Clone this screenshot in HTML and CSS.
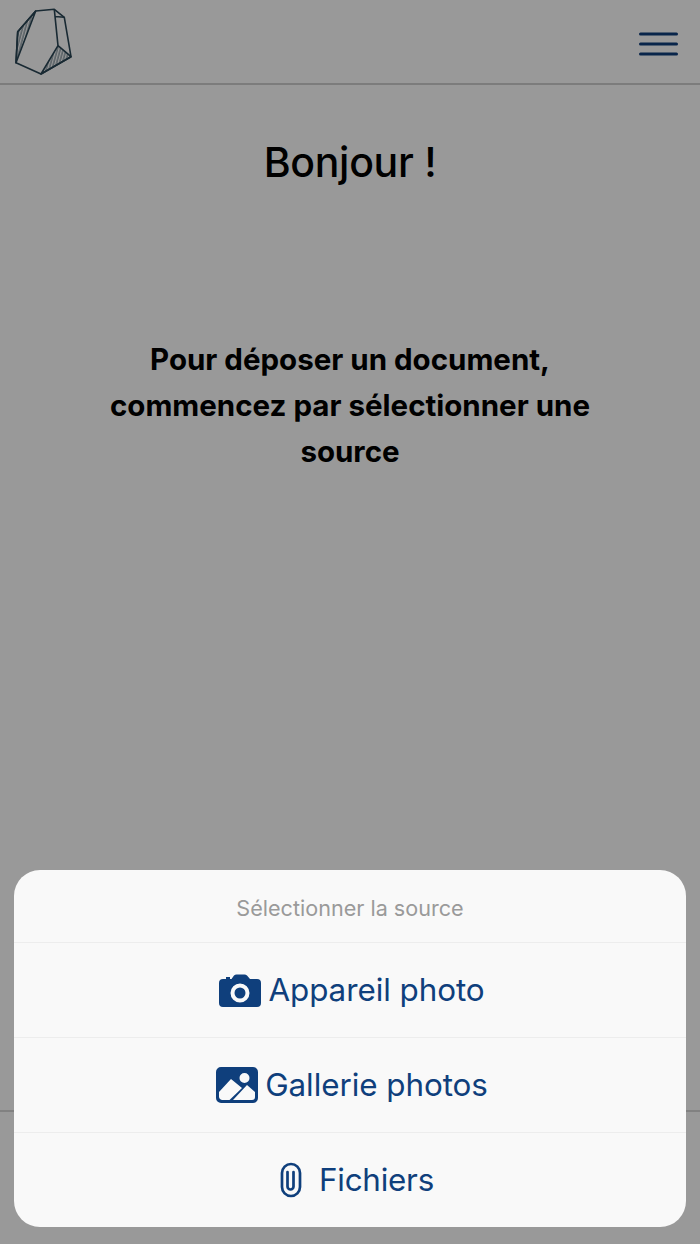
FILE: index.html
```html
<!DOCTYPE html>
<html lang="fr">
<head>
<meta charset="utf-8">
<title>Bonjour</title>
<link rel="stylesheet" href="styles.css">
</head>
<body>
<div class="page">
  <header class="topbar">
    <svg class="logo" width="80" height="83" viewBox="0 0 80 83" fill="none" stroke="#2a4656" stroke-width="1.6" stroke-linejoin="round">
      <defs>
        <pattern id="hatch" width="2.8" height="2.8" patternUnits="userSpaceOnUse" patternTransform="rotate(15)">
          <line x1="1" y1="0" x2="1" y2="2.8" stroke="#2a4656" stroke-width=".8"/>
        </pattern>
      </defs>
      <path d="M17.700 31.700L35.700 11L16 62.700Z" fill="url(#hatch)"/>
      <path d="M58 45.700L71 56.700L41 74Z" fill="url(#hatch)"/>
      <path d="M35.700 11L54.300 9.300L64.300 17.300L71 56.700L41 74L16 62.700L17.700 31.700Z"/>
      <path d="M54.300 9.300L58 45.700M55 16.500L64.300 17.300"/>
    </svg>
    <svg class="menu" width="39" height="24" viewBox="0 0 39 24"><path d="M1.500 2H37.500M1.500 12H37.500M1.500 22H37.500" stroke="#0f3f7c" stroke-width="3" stroke-linecap="round"/></svg>
  </header>
  <main class="content">
    <h1 class="title">Bonjour !</h1>
    <p class="lead">Pour déposer un document,<br>commencez par sélectionner une source</p>
  </main>
  <footer class="bottombar"></footer>
</div>
<div class="scrim"></div>
<section class="sheet">
  <div class="sheet-title">Sélectionner la source</div>
  <button class="action"><svg class="ico" width="42" height="33" viewBox="0 0 42 33"><path fill="#0f3f7c" fill-rule="evenodd" d="M4 5h3V3h4v2h1.500L15 1.500Q16 .5 17.500 .5h8Q27 .5 28 1.500L31 5h7a4 4 0 0 1 4 4v20a4 4 0 0 1-4 4H4a4 4 0 0 1-4-4V9a4 4 0 0 1 4-4zM21 9.500a9.500 9.500 0 1 0 0 19 9.500 9.500 0 0 0 0-19zm0 4a5.500 5.500 0 1 1 0 11 5.500 5.500 0 0 1 0-11z"/></svg><span>Appareil photo</span></button>
  <button class="action"><svg class="ico" width="42" height="36" viewBox="0 0 42 36"><path fill="#0f3f7c" fill-rule="evenodd" d="M5 0h32a5 5 0 0 1 5 5v26a5 5 0 0 1-5 5H5a5 5 0 0 1-5-5V5a5 5 0 0 1 5-5zM28.500 6a5 5 0 1 0 0 10 5 5 0 0 0 0-10zM3 25v4.500a3.500 3.500 0 0 0 3 3.500h7.500L26 21 15 12zM17 33h19a3 3 0 0 0 3-3v-5L31 18z"/></svg><span>Gallerie photos</span></button>
  <button class="action action-file"><svg class="ico clip" width="22" height="36" viewBox="0 0 22 36" fill="none" stroke="#0f3f7c" stroke-width="2.700" stroke-linecap="round"><path d="M2 11a9 9 0 0 1 18 0V25a9 9 0 0 1-18 0Z"/><path d="M7.500 10V24.500a3 3 0 0 0 6 0V10"/></svg><span class="file-label">Fichiers</span></button>
</section>
</body>
</html>
```

FILE: styles.css
```css
* { box-sizing: border-box; }
html, body { margin: 0; padding: 0; }
body { width: 700px; height: 1244px; overflow: hidden; background: #fff; font-family: Inter, "Liberation Sans", sans-serif; position: relative; }
.page { height: 1244px; display: flex; flex-direction: column; }
.topbar { height: 85px; border-bottom: 2px solid #cfcfcf; display: flex; justify-content: space-between; align-items: center; padding: 0 22px 0 0; }
.menu { margin-top: 4px; }
.content { flex: 1; display: flex; flex-direction: column; align-items: center; text-align: center; }
.title { margin: 50px 0 0; font-size: 41px; line-height: 54px; font-weight: 450; color: #000; letter-spacing: -.3px; }
.lead { margin: 146.5px 0 0; width: 500px; font-size: 29.5px; line-height: 46px; font-weight: 700; color: #000; }
.bottombar { height: 134px; border-top: 2px solid #d8d8d8; }
.scrim { position: absolute; inset: 0; background: rgba(0,0,0,.4); }
.sheet { position: absolute; left: 14px; top: 870px; width: 672px; height: 357px; background: #f9f9f9; border-radius: 26px; overflow: hidden; display: flex; flex-direction: column; }
.sheet-title { height: 73px; display: flex; align-items: center; justify-content: center; font-size: 21.6px; color: #9a9a9a; border-bottom: 1px solid #ededed; padding-top: 4px; }
.action { height: 95px; border: 0; border-bottom: 1px solid #ededed; background: transparent; display: flex; align-items: center; justify-content: center; gap: 7px; font: inherit; font-size: 31.4px; letter-spacing: -.06px; color: #0f3f7c; padding: 0 0 0 4px; }
.action:last-child { border-bottom: 0; height: 94px; }
.action-file { padding-left: 14px; }
.file-label { letter-spacing: -.25px; }
.clip { margin-right: 10px; }
```
